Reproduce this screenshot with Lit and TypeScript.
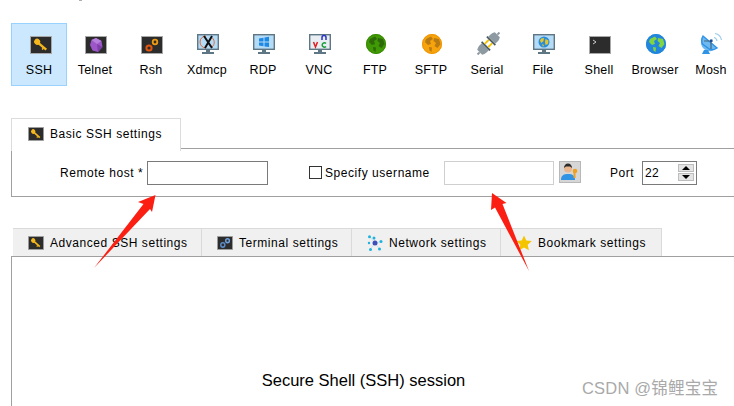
import { LitElement, html, css, svg } from "lit";
import { customElement } from "lit/decorators.js";

const keyGlyph = svg`<rect x="0.5" y="0.5" width="21" height="17" fill="#2c2c2c" stroke="#a8a8a8"/><g transform="rotate(40 11 9)"><circle cx="6" cy="9" r="3" fill="#f5b81c"/><rect x="7" y="8" width="11" height="2.4" fill="#f5b81c"/><rect x="14" y="10" width="1.6" height="1.8" fill="#f5b81c"/></g>`;
const box = (inner: unknown) => svg`<rect x="0.5" y="0.5" width="21" height="17" fill="#2c2c2c" stroke="#a8a8a8"/>${inner}`;
const monitor = (inner: unknown) => svg`<rect x="0.7" y="0.7" width="20.6" height="14.6" fill="#b5dcf7" stroke="#5f7684" stroke-width="1.4"/>${inner}<rect x="9" y="16" width="4" height="2.5" fill="#5f7684"/><rect x="5" y="18" width="12" height="2" fill="#5f7684"/>`;
const globe = (c1: string, c2: string, c3: string) => svg`<circle cx="10" cy="10" r="10" fill="${c1}"/><path d="M4 5 L9 2.5 L11 5 L8 7 L9 10 L6 11 L3 8Z M12 4 L17 5 L18.5 10 L15.5 14 L12.5 12 L14 9 L11.5 7Z M7 13 L10 13.5 L9.5 18 L7.5 16.5Z" fill="${c2}"/><circle cx="10" cy="10" r="9.5" fill="none" stroke="${c3}"/>`;

const ICONS: Record<string, unknown> = {
  SSH: html`<svg width="22" height="18" viewBox="0 0 22 18" class="ic first">${keyGlyph}</svg>`,
  Telnet: html`<svg width="22" height="18" viewBox="0 0 22 18" class="ic">${box(svg`<path d="M11 2 L16.5 5 L17.5 11 L13 16 L7.5 14.5 L5 9 L6.5 4Z" fill="#9c56c8"/><path d="M11 2 L16.5 5 L12 8 L6.5 4Z" fill="#b67fdc"/><path d="M12 8 L17.5 11 L13 16Z" fill="#7e3fa8"/>`)}</svg>`,
  Rsh: html`<svg width="22" height="18" viewBox="0 0 22 18" class="ic">${box(svg`<circle cx="8" cy="12" r="2.6" fill="none" stroke="#e2570e" stroke-width="2"/><circle cx="14" cy="6" r="2.3" fill="none" stroke="#f09a12" stroke-width="1.8"/>`)}</svg>`,
  Xdmcp: html`<svg width="22" height="20" viewBox="0 0 22 20" class="ic">${monitor(svg`<path d="M9 2 A6 6 0 1 0 9 14" fill="none" stroke="#e06a3a"/><path d="M14 3 A6 6 0 0 1 15 13" fill="none" stroke="#e06a3a"/><path d="M7 2 L15 14 M15 2 L8 14" stroke="#111" stroke-width="2"/>`)}</svg>`,
  RDP: html`<svg width="22" height="20" viewBox="0 0 22 20" class="ic">${monitor(svg`<path d="M6 4.5 L10.5 3.7 V7.6 H6Z M11.5 3.5 L16 2.8 V7.6 H11.5Z M6 8.5 H10.5 V12.3 L6 11.6Z M11.5 8.5 H16 V13 L11.5 12.4Z" fill="#1e88e5"/>`)}</svg>`,
  VNC: html`<svg width="22" height="20" viewBox="0 0 22 20" class="ic"><rect x="0.7" y="0.7" width="20.6" height="14.6" fill="#e9eef2" stroke="#5f7684" stroke-width="1.4"/><path d="M4.500 8 L6.500 13 L8.500 8" fill="none" stroke="#e02020" stroke-width="1.500"/><path d="M13 6 V3.500 A2 2 0 0 1 17 3.500 V6" fill="none" stroke="#2a35c8" stroke-width="1.500"/><path d="M17 9.500 A2.200 2.200 0 1 0 17 12.500" fill="none" stroke="#1b9e3a" stroke-width="1.500"/><rect x="9" y="16" width="4" height="2.500" fill="#5f7684"/><rect x="5" y="18" width="12" height="2" fill="#5f7684"/></svg>`,
  FTP: html`<svg width="20" height="20" viewBox="0 0 20 20" class="ic">${globe("#3f9a05", "#2d6a0a", "#3b8a06")}</svg>`,
  SFTP: html`<svg width="20" height="20" viewBox="0 0 20 20" class="ic">${globe("#f7a30c", "#b87a12", "#ee9507")}</svg>`,
  Serial: html`<svg width="23" height="23" viewBox="0 0 23 23" class="ic ser"><g transform="rotate(-45 11.500 11.500)"><rect x="-4" y="10.500" width="3" height="2" fill="#8e9aa2"/><path d="M-1 8 Q1 6.500 4 6.500 H7 V16.500 H4 Q1 16.500 -1 15Z" fill="#8e9aa2"/><rect x="7" y="5.500" width="1.600" height="12" fill="#46565f"/><rect x="8.600" y="8.200" width="5.800" height="1.800" fill="#f5c400"/><rect x="8.600" y="13" width="5.800" height="1.800" fill="#f5c400"/><rect x="14.400" y="5.500" width="1.600" height="12" fill="#46565f"/><path d="M16 6.500 H19 Q22 6.500 24 8 V15 Q22 16.500 19 16.500 H16Z" fill="#8e9aa2"/><rect x="24" y="10.500" width="3" height="2" fill="#8e9aa2"/></g></svg>`,
  File: html`<svg width="22" height="20" viewBox="0 0 22 20" class="ic">${monitor(svg`<circle cx="11" cy="8" r="5.500" fill="#2b8fd8"/><path d="M8 4.500 L11 4 L10.500 7 L8.500 9 L7 7Z M12.500 5 L15.500 6.500 L15 10 L12.500 11 L12 8Z M9 10 L11 11 L10 13Z" fill="#e8c52a"/>`)}</svg>`,
  Shell: html`<svg width="22" height="18" viewBox="0 0 22 18" class="ic">${box(svg`<path d="M4 4 L7 6 L4 8" fill="none" stroke="#ddd" stroke-width="0.9"/>`)}</svg>`,
  Browser: html`<svg width="20" height="20" viewBox="0 0 20 20" class="ic">${globe("#2286dd", "#82d442", "#2286dd")}</svg>`,
  Mosh: html`<svg width="22" height="23" viewBox="0 0 22 23" class="ic ser"><path d="M2 4 L16 16 A9 9 0 0 1 2 4Z" fill="#6db9f0"/><path d="M2 4 A9 9 0 0 0 1.500 12 L9 17.500 A9 9 0 0 0 16 16 Z" fill="none" stroke="#2f93e6" stroke-width="1.400"/><path d="M1 22 L3 18 H7 L9 22Z" fill="#2f93e6"/><path d="M3 9 H10 V17 M10 9 L11 8" stroke="#44687f" stroke-width="1.200" fill="none"/><rect x="9" y="7.500" width="2.500" height="2.500" fill="#1d4f96"/><path d="M13 5.500 A4 4 0 0 1 16 9 M14 1.500 A8 8 0 0 1 20.500 8" fill="none" stroke="#9ccbe9" stroke-width="1.200"/></svg>`,
};

const smallKey = html`<svg width="16" height="14" viewBox="0 0 22 18" preserveAspectRatio="none">${keyGlyph}</svg>`;
const gears = html`<svg width="16" height="14" viewBox="0 0 22 18" preserveAspectRatio="none">${box(svg`<circle cx="8" cy="11.500" r="2.800" fill="none" stroke="#5b8ac8" stroke-width="2"/><circle cx="14.500" cy="6" r="2.500" fill="none" stroke="#6fa0dd" stroke-width="2"/>`)}</svg>`;
const network = html`<svg width="16" height="16" viewBox="0 0 16 16"><g stroke="#b9dcec" stroke-width="0.6"><path d="M8 8 L3 2 M8 8 L7 2.500 M8 8 L14 7 M8 8 L12.500 14 M8 8 L3.500 14"/></g><circle cx="8" cy="8" r="2.500" fill="#3f4fb8"/><g fill="#1db3dc"><circle cx="2.500" cy="1.800" r="1.500"/><circle cx="7" cy="3" r="1.500"/><circle cx="14" cy="6.500" r="1.500"/><circle cx="12.500" cy="14" r="1.500"/><circle cx="3.500" cy="14.500" r="1.500"/><circle cx="2" cy="8" r="1.200"/></g></svg>`;
const star = html`<svg width="16" height="16" viewBox="0 0 16 16"><path d="M8 0.500 L10.300 5.500 L15.800 6.100 L11.700 9.800 L12.900 15.200 L8 12.400 L3.100 15.200 L4.300 9.800 L0.200 6.100 L5.700 5.500Z" fill="#f5c400"/></svg>`;

const SESSIONS = ["SSH","Telnet","Rsh","Xdmcp","RDP","VNC","FTP","SFTP","Serial","File","Shell","Browser","Mosh"];
const TABS: [string, unknown, number][] = [
  ["Advanced SSH settings", smallKey, 189],
  ["Terminal settings", gears, 150],
  ["Network settings", network, 149],
  ["Bookmark settings", star, 161],
];

@customElement("app-root")
export class AppRoot extends LitElement {
  static styles = css`
    :host { display: block; position: relative; width: 734px; height: 406px; overflow: hidden; background: #fff; color: #000;
      font-family: "Liberation Sans", Arial, sans-serif; font-size: 12px; letter-spacing: 0.55px; }
    .toolbar { display: flex; padding: 23px 0 0 11px; height: 63px; }
    .tile { flex: 0 0 56px; box-sizing: border-box; height: 63px; display: flex; flex-direction: column; align-items: center; border: 1px solid transparent; }
    .tile.on { background: #cce8ff; border-color: #99d1ff; }
    .icwrap { height: 30px; display: flex; justify-content: center; align-items: flex-end; }
    .tile .lbl { margin-top: 9px; white-space: nowrap; line-height: 14px; font-size: 12.5px; letter-spacing: 0.2px; }
    .ic { display: block; margin-left: 2px; }
    .ic.first { margin-left: 4px; }
    .ic.ser { margin-bottom: -1px; }
    .top-tabs { display: flex; margin: 32px 0 0 11px; height: 31px; }
    .tab-main { box-sizing: border-box; width: 170px; height: 33px; border: 1px solid #dcdcdc; border-bottom: 0; background: #fff; display: flex; align-items: center; gap: 6px; padding: 0 0 2px 16px; position: relative; z-index: 1; }
    .filler { flex: 1; border-bottom: 1px solid #a0a0a0; }
    .panel1 { box-sizing: border-box; margin-left: 11px; height: 48px; border-left: 1px solid #a0a0a0; border-bottom: 1px solid #a0a0a0; display: flex; align-items: flex-start; padding-top: 12px; }
    .lb { line-height: 24px; white-space: nowrap; }
    .input { box-sizing: border-box; height: 24px; border: 1px solid #7a7a7a; background: #fff; }
    .input.host { width: 121px; margin-left: 4px; }
    .rh { margin-left: 48px; width: 83px; }
    .cb { box-sizing: border-box; width: 13px; height: 13px; border: 1px solid #333; margin: 5px 3px 0 41px; }
    .su { width: 104px; }
    .input.user { width: 110px; margin-left: 15px; border-color: #cfcfcf; }
    .ubtn { box-sizing: border-box; width: 22px; height: 22px; margin-left: 5px; background: #d6d6d6; border: 1px solid #b8b8b8; display: flex; align-items: center; justify-content: center; }
    .pt { margin-left: 29px; width: 32px; }
    .spin { box-sizing: border-box; width: 55px; height: 24px; border: 1px solid #7a7a7a; display: flex; justify-content: space-between; padding: 0 2px; }
    .spin span { line-height: 22px; letter-spacing: 0.3px; }
    .arrows { display: flex; flex-direction: column; gap: 1px; padding-top: 2px; }
    .sb { box-sizing: border-box; width: 16px; height: 8px; background: #e4e4e4; border: 1px solid #bdbdbd; display: flex; align-items: center; justify-content: center; }
    .tabs { display: flex; margin: 31px 0 0 13px; height: 28px; }
    .t { box-sizing: border-box; height: 28px; background: #f0f0f0; border: 1px solid #dadada; border-left: 0; border-bottom: 0; display: flex; align-items: center; gap: 6px; padding-left: 15px; white-space: nowrap; }
    .t svg { flex: none; }
    .panel2 { box-sizing: border-box; margin-left: 11px; height: 150px; border-top: 1px solid #a0a0a0; border-left: 1px solid #a0a0a0; padding: 114px 19px 0 0; text-align: center; font-size: 16.5px; letter-spacing: 0; line-height: 18px; }
    .overlay { position: absolute; left: 0; top: 0; pointer-events: none; }
    .wm { position: absolute; left: 582px; top: 378px; font-family: "Liberation Sans", "Noto Sans CJK SC", sans-serif; font-size: 16.5px; letter-spacing: 0.2px; color: #a9a9a9; line-height: 20px; white-space: nowrap; }
    .speck { position: absolute; left: 79px; top: 0; width: 3px; height: 1px; background: #a9b1b8; }
  `;

  render() {
    return html`
      <div class="speck"></div>
      <div class="toolbar">
        ${SESSIONS.map((s, i) => html`<div class="tile ${i === 0 ? "on" : ""}">
          <div class="icwrap">${ICONS[s]}</div><div class="lbl">${s}</div></div>`)}
      </div>
      <div class="top-tabs">
        <div class="tab-main">${smallKey}<span>Basic SSH settings</span></div>
        <div class="filler"></div>
      </div>
      <div class="panel1">
        <div class="lb rh">Remote host *</div>
        <div class="input host"></div>
        <div class="cb"></div>
        <div class="lb su">Specify username</div>
        <div class="input user"></div>
        <div class="ubtn"><svg width="20" height="20" viewBox="0 0 20 20"><circle cx="8" cy="6.500" r="4" fill="#e9b58c"/><path d="M4 6 A4 4.500 0 0 1 12 6 L10 4.500 H6Z" fill="#2b2b2b"/><path d="M1 18 C1 13 4 12 8 12 C12 12 15 13 15 18Z" fill="#2f93e6"/><circle cx="15" cy="9" r="2.300" fill="#f0a020"/><rect x="13.500" y="10" width="2" height="6" fill="#f0a020"/></svg></div>
        <div class="lb pt">Port</div>
        <div class="spin"><span>22</span><div class="arrows">
          <div class="sb"><svg width="8" height="4" viewBox="0 0 8 4"><path d="M4 0 L8 4 H0Z" fill="#000"/></svg></div>
          <div class="sb"><svg width="8" height="4" viewBox="0 0 8 4"><path d="M0 0 H8 L4 4Z" fill="#000"/></svg></div>
        </div></div>
      </div>
      <div class="tabs">
        ${TABS.map(([t, ic, w]) => html`<div class="t" style="width:${w}px">${ic}<span>${t}</span></div>`)}
      </div>
      <div class="panel2">Secure Shell (SSH) session</div>
      <svg class="overlay" width="734" height="406" viewBox="0 0 734 406">
        <path d="M155.500 195 L138 202 L143.500 204 L94 268 L150 209 L152 212Z" fill="#fb1f13"/>
        <path d="M492 193 L506.500 203 L502.500 204 L529 271 L495 207.500 L491 210Z" fill="#fb1f13"/>
      </svg>
      <div class="wm">CSDN @锦鲤宝宝</div>
    `;
  }
}
